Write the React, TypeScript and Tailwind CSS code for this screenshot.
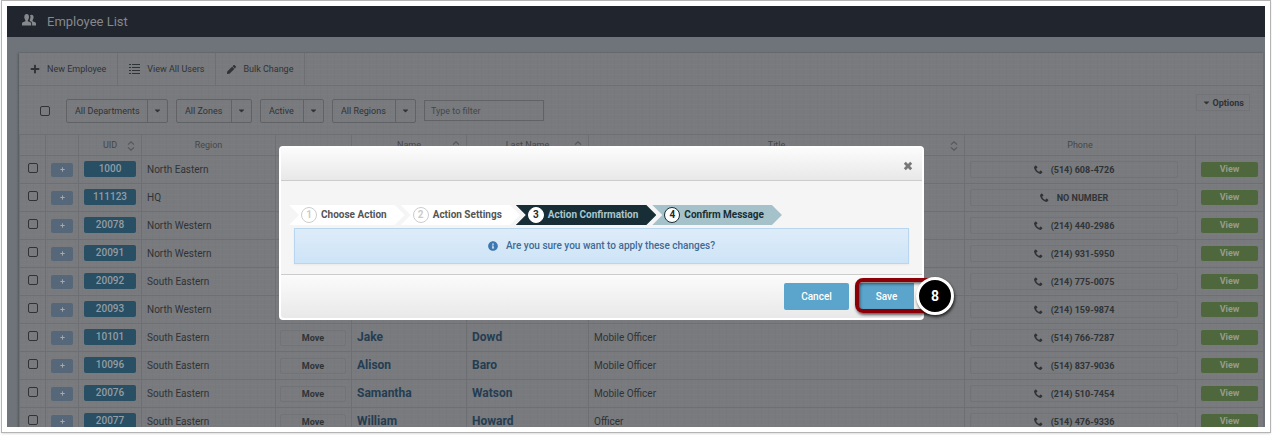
import type { ReactNode } from 'react'
import { FaCaretDown, FaInfoCircle, FaPen, FaPlus } from 'react-icons/fa'
import { ImPhone } from 'react-icons/im'

type Employee = {
  uid: string
  region: string
  first: string
  last: string
  title: string
  phone: string
}

const EMPLOYEES: Employee[] = [
  { uid: '1000', region: 'North Eastern', first: '', last: '', title: '', phone: '(514) 608-4726' },
  { uid: '111123', region: 'HQ', first: '', last: '', title: '', phone: 'NO NUMBER' },
  { uid: '20078', region: 'North Western', first: '', last: '', title: '', phone: '(214) 440-2986' },
  { uid: '20091', region: 'North Western', first: '', last: '', title: '', phone: '(214) 931-5950' },
  { uid: '20092', region: 'South Eastern', first: '', last: '', title: '', phone: '(214) 775-0075' },
  { uid: '20093', region: 'North Western', first: '', last: '', title: '', phone: '(214) 159-9874' },
  { uid: '10101', region: 'South Eastern', first: 'Jake', last: 'Dowd', title: 'Mobile Officer', phone: '(514) 766-7287' },
  { uid: '10096', region: 'South Eastern', first: 'Alison', last: 'Baro', title: 'Mobile Officer', phone: '(514) 837-9036' },
  { uid: '20076', region: 'South Eastern', first: 'Samantha', last: 'Watson', title: 'Mobile Officer', phone: '(214) 510-7454' },
  { uid: '20077', region: 'South Eastern', first: 'William', last: 'Howard', title: 'Officer', phone: '(514) 476-9336' },
]

const FILTERS = [
  { label: 'All Departments', width: 'w-[102px]' },
  { label: 'All Zones', width: 'w-[76px]' },
  { label: 'Active', width: 'w-16' },
  { label: 'All Regions', width: 'w-[84px]' },
]

const STEPS = [
  { label: 'Choose Action', box: 'bg-white text-[#555]', circle: 'border-[#ccc] text-[#ccc]' },
  { label: 'Action Settings', box: 'bg-white text-[#555]', circle: 'border-[#ccc] text-[#ccc]' },
  { label: 'Action Confirmation', box: 'bg-[#182e36] text-[#a9c7cf]', circle: 'border-white text-[#182e36]' },
  { label: 'Confirm Message', box: 'bg-[#a5c2ca] text-[#182e36]', circle: 'border-[#182e36] text-[#182e36]' },
]

function UsersIcon() {
  return (
    <svg viewBox="0 0 14 12" className="mb-1 h-3 w-3.5 fill-current" aria-hidden="true">
      <path d="M4.7 0C6.2 0 7 1.1 7 2.9c0 1.300-.5 2.300-1.100 3v1.300l2.500 1.100c.5.200.8.700.8 1.300V11.500H0V9.600c0-.6.300-1.100.8-1.300l2.600-1.100V5.900c-.6-.7-1.100-1.700-1.100-3C2.300 1.100 3.200 0 4.700 0Z" />
      <path d="M8 1.300C8.400.9 8.900.700 9.500.7c1.400 0 2.100 1 2.100 2.600 0 1.200-.4 2.100-1 2.700v1.200l2.500 1.100c.5.200.9.700.9 1.300V11.500h-3.900V9.500c0-.9-.5-1.700-1.300-2.100L7.700 6.900C8 6.600 7.900 6 7.700 5.700 8.200 4.900 8.500 4 8.500 2.900 8.500 2.300 8.300 1.800 8 1.300Z" />
    </svg>
  )
}

function ListIcon() {
  return (
    <svg viewBox="0 0 11 10" className="h-2.5 w-[11px] fill-current" aria-hidden="true">
      {[0, 3, 6, 9].map(y => (
        <path key={y} d={`M0 ${y}h2v1H0zM3 ${y}h8v1H3z`} />
      ))}
    </svg>
  )
}

function CloseIcon() {
  return (
    <svg viewBox="0 0 10 10" className="size-2.5 stroke-current" aria-hidden="true">
      <path d="m1.800 1.800 6.400 6.400M8.200 1.800 1.800 8.200" strokeWidth="2.8" />
    </svg>
  )
}

function Sort() {
  return (
    <svg viewBox="0 0 8 10" className="absolute right-1.5 top-1.5 h-2.5 w-2 fill-none stroke-[#55585c]" aria-hidden="true">
      <path d="M1 3.6 4 .8l3 2.8M1 6.4l3 2.8 3-2.8" strokeWidth="1.2" />
    </svg>
  )
}

function Th({ children, sort }: { children?: ReactNode; sort?: boolean }) {
  return (
    <th className="relative h-[21px] border-l border-t border-[#6d6f72] p-0 text-center text-[9px] font-normal text-[#45484c]">
      {children}
      {sort && <Sort />}
    </th>
  )
}

function ToolButton({ icon, children }: { icon: ReactNode; children: ReactNode }) {
  return (
    <button className="flex items-center gap-[7px] border-r border-[#6d6f72] px-[11px] text-[9px] text-[#303336]">
      {icon}
      {children}
    </button>
  )
}

function Row({ e }: { e: Employee }) {
  const cell = 'h-7 border-l border-t border-[#6d6f72] p-0'
  return (
    <tr>
      <td className={cell}>
        <input type="checkbox" aria-label={`Select ${e.uid}`} className="mx-auto mb-1 block size-2.5 appearance-none rounded-xs border border-[#2f3236]" />
      </td>
      <td className={cell}>
        <button aria-label={`Expand ${e.uid}`} className="mx-auto flex h-3.5 w-[22px] items-center justify-center rounded-xs bg-[#566779] text-[#a3aab1]">
          <FaPlus size={5} />
        </button>
      </td>
      <td className={cell}>
        <button className="mx-auto mb-0.5 block h-4 w-13 rounded-xs bg-[#294f64] text-center font-medium leading-4 text-[#949da3]">{e.uid}</button>
      </td>
      <td className={`${cell} pl-[5px] text-[#303336]`}>{e.region}</td>
      <td className={cell}>
        <button className="ml-1 block h-4 w-[66px] rounded-xs border border-[#717376] text-[9px] font-bold leading-3 text-[#303336]">Move</button>
      </td>
      <td className={`${cell} pb-0.5 pl-[5px] text-xs font-bold text-[#253d52]`}>{e.first}</td>
      <td className={`${cell} pb-0.5 pl-[5px] text-xs font-bold text-[#253d52]`}>{e.last}</td>
      <td className={`${cell} pl-[5px] text-[#303336]`}>{e.title}</td>
      <td className={cell}>
        <a href="#" className="ml-[5px] mr-[17px] flex h-[17px] items-center justify-center gap-2 rounded-xs border border-[#717376] text-[9px] font-bold text-[#303336]">
          <ImPhone size={9} />
          {e.phone}
        </a>
      </td>
      <td className={cell}>
        <button className="ml-[5px] block h-[15px] w-[57px] rounded-xs bg-[#4f673d] text-center text-[9px] font-bold leading-[15px] text-[#969b8e]">View</button>
      </td>
    </tr>
  )
}

function WizardDialog() {
  return (
    <div role="dialog" aria-label="Bulk change" className="absolute left-[279px] top-[146px] w-[645px] rounded border-2 border-white bg-[#f5f5f5] text-[10px]">
      <div className="flex h-[33px] items-center justify-end rounded-t border-b border-[#ccc] bg-linear-to-b from-[#fcfcfc] to-[#e8e8e8] pr-[9px] pt-1">
        <button aria-label="Close" className="text-[#777]">
          <CloseIcon />
        </button>
      </div>

      <div className="border-b border-[#ccc] px-[13px] pb-2.5 pt-6">
        <ol className="-ml-[5px] flex h-5 font-bold">
          {STEPS.map((s, i) => (
            <li
              key={s.label}
              className={`-mr-1 flex items-center gap-1 pl-3 pr-[18px] [clip-path:polygon(0_0,calc(100%-10px)_0,100%_50%,calc(100%-10px)_100%,0_100%,10px_50%)] ${s.box}`}
            >
              <span className={`flex size-4 items-center justify-center rounded-full border bg-white ${s.circle}`}>{i + 1}</span>
              {s.label}
            </li>
          ))}
        </ol>
        <div className="mt-[3px] flex h-9 items-center justify-center gap-2 border border-[#b8d6f0] bg-linear-to-b from-[#deecf9] to-[#cde4f7] font-medium text-[#3f6a94] shadow-xs">
          <FaInfoCircle size={10} className="text-[#3d77b0]" />
          Are you sure you want to apply these changes?
        </div>
      </div>

      <div className="flex h-[43px] items-center justify-end gap-2.5 rounded-b bg-linear-to-b from-[#fbfbfb] to-[#e9e9e9] pr-2">
        <button className="h-[27px] w-[65px] rounded-xs bg-[#5ba4cb] font-medium text-white">Cancel</button>
        <div className="relative">
          <button className="h-[27px] w-[55px] bg-[#5ba4cb] font-medium text-white">Save</button>
          <div className="pointer-events-none absolute -left-1 -top-[5px] h-[35px] w-20 rounded-lg border-4 border-[#8b0008] shadow-[1px_2px_3px_rgba(0,0,0,0.6),inset_1px_2px_3px_rgba(0,0,0,0.5)]" />
          <div className="absolute -top-1.5 left-[57px] flex size-[38px] items-center justify-center rounded-full border-3 border-white bg-black text-sm font-bold text-white shadow-[1px_2px_3px_rgba(0,0,0,0.7)]">
            8
          </div>
        </div>
      </div>
    </div>
  )
}

export default function App() {
  return (
    <div className="relative h-screen overflow-hidden bg-white px-px pb-0.5 font-[Roboto,sans-serif] text-[10px] leading-3">
      <div className="flex h-full flex-col border border-[#b4b4b4] p-[5px] shadow-sm">
        <div className="min-h-0 flex-1 overflow-hidden bg-[#6e7479]">
          <header className="flex h-[31px] items-center gap-[11px] bg-[#20252e] pl-[15px] text-[#85888c]">
            <UsersIcon />
            <h1 className="text-[13px]">Employee List</h1>
          </header>

          <main className="ml-3 mr-px mt-4 border-r border-[#6d6f72] bg-[#787a7d] bg-[repeating-linear-gradient(0deg,rgba(255,255,255,0.015)_0_1px,transparent_1px_5px),repeating-linear-gradient(90deg,rgba(0,0,0,0.015)_0_1px,transparent_1px_7px)] shadow-[-1px_0_2px_rgba(0,0,0,0.25)]">
            <nav className="flex h-[33px] border-b border-[#6d6f72]">
              <ToolButton icon={<FaPlus size={10} />}>New Employee</ToolButton>
              <ToolButton icon={<ListIcon />}>View All Users</ToolButton>
              <ToolButton icon={<FaPen size={9} />}>Bulk Change</ToolButton>
            </nav>

            <div className="flex h-12 items-center pl-[21px] pr-[13px] pt-px text-[9px] text-[#303336]">
              <input type="checkbox" aria-label="Select all" className="mr-4 size-2.5 appearance-none rounded-xs border border-[#2f3236]" />
              <div className="flex gap-2">
                {FILTERS.map(f => (
                  <div key={f.label} className={`relative ${f.width}`}>
                    <select aria-label={f.label} className="block h-6 w-full appearance-none rounded-xs border border-[#606265] pl-2">
                      <option>{f.label}</option>
                    </select>
                    <span className="pointer-events-none absolute inset-y-px right-px flex w-5 items-center justify-center border-l border-[#606265]">
                      <FaCaretDown size={9} />
                    </span>
                  </div>
                ))}
              </div>
              <input aria-label="Filter" placeholder="Type to filter" className="ml-2 h-[21px] w-[120px] border border-[#606265] px-1.5 placeholder:text-[#45484c]" />
              <button className="mb-4 ml-auto flex h-[17px] items-center gap-0.5 border border-[#717376] px-[5px] font-bold">
                <FaCaretDown size={9} />
                Options
              </button>
            </div>

            <table className="w-full table-fixed border-separate border-spacing-0">
              <colgroup>
                <col className="w-[26px]" />
                <col className="w-[33px]" />
                <col className="w-[63px]" />
                <col className="w-[134px]" />
                <col className="w-[76px]" />
                <col className="w-[115px]" />
                <col className="w-[122px]" />
                <col />
                <col className="w-[231px]" />
                <col className="w-[68px]" />
              </colgroup>
              <thead>
                <tr>
                  <Th />
                  <Th />
                  <Th sort>UID</Th>
                  <Th>Region</Th>
                  <Th />
                  <Th sort>Name</Th>
                  <Th sort>Last Name</Th>
                  <Th sort>Title</Th>
                  <Th>Phone</Th>
                  <Th />
                </tr>
              </thead>
              <tbody>
                {EMPLOYEES.map(e => (
                  <Row key={e.uid} e={e} />
                ))}
              </tbody>
            </table>
          </main>
        </div>
      </div>

      <WizardDialog />
    </div>
  )
}
